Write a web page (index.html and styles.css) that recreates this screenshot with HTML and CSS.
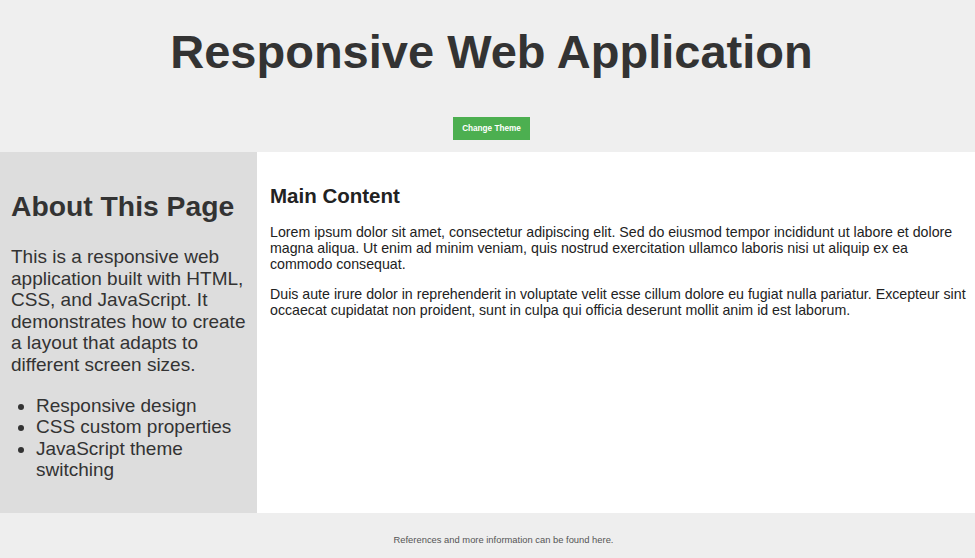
FILE: index.html
```html
<!DOCTYPE html>
<html lang="en">
<head>
<meta charset="utf-8">
<title>Responsive Web Application</title>
<link rel="stylesheet" href="styles.css">
</head>
<body>
<header class="site-header">
  <h1 class="site-title">Responsive Web Application</h1>
  <button class="theme-btn" type="button">Change Theme</button>
</header>
<div class="layout">
  <aside class="sidebar">
    <h2 class="sidebar-title">About This Page</h2>
    <p class="sidebar-text">This is a responsive web application built with HTML, CSS, and JavaScript. It demonstrates how to create a layout that adapts to different screen sizes.</p>
    <ul class="sidebar-list">
      <li>Responsive design</li>
      <li>CSS custom properties</li>
      <li>JavaScript theme switching</li>
    </ul>
  </aside>
  <main class="content">
    <h3 class="content-title">Main Content</h3>
    <p class="content-text">Lorem ipsum dolor sit amet, consectetur adipiscing elit. Sed do eiusmod tempor incididunt ut labore et dolore magna aliqua. Ut enim ad minim veniam, quis nostrud exercitation ullamco laboris nisi ut aliquip ex ea commodo consequat.</p>
    <p class="content-text">Duis aute irure dolor in reprehenderit in voluptate velit esse cillum dolore eu fugiat nulla pariatur. Excepteur sint occaecat cupidatat non proident, sunt in culpa qui officia deserunt mollit anim id est laborum.</p>
  </main>
</div>
<footer class="site-footer">
  <p class="footer-text">References and more information can be found here.</p>
</footer>
</body>
</html>
```

FILE: styles.css
```css
html, body {
  margin: 0;
  padding: 0;
}

body {
  font-family: "Liberation Sans", Arial, sans-serif;
  color: #333;
  background: #fff;
  height: 558px;
  display: flex;
  flex-direction: column;
}

.site-header {
  background: #efefef;
  display: flex;
  flex-direction: column;
  align-items: center;
  padding: 25px 0 12px 8px;
}

.site-title {
  margin: 0;
  font-size: 47px;
  font-weight: bold;
  color: #333;
  line-height: 53px;
}

.theme-btn {
  margin-top: 39px;
  background: #4caf50;
  color: #fff;
  border: none;
  font-family: "Liberation Sans", Arial, sans-serif;
  font-size: 8.2px;
  font-weight: bold;
  padding: 0;
  height: 23px;
  width: 77px;
  cursor: pointer;
}

.layout {
  flex: 1;
  display: flex;
  min-height: 0;
}

.sidebar {
  width: 257px;
  flex: none;
  box-sizing: border-box;
  background: #ddd;
  padding: 15px 11px 13px;
  color: #333;
}

.sidebar-title {
  font-size: 28.3px;
  margin: 23px 0;
}

.sidebar-text {
  font-size: 19px;
  line-height: 21.6px;
  margin: 19px 0;
}

.sidebar-list {
  font-size: 19px;
  line-height: 21.6px;
  margin: 19px 0;
  padding-left: 25px;
}

.content {
  flex: 1;
  background: #fff;
  padding: 12px 8px 13px 13px;
  color: #222;
}

.content-title {
  font-size: 20.5px;
  margin: 20px 0 16px;
}

.content-text {
  font-size: 14.2px;
  margin: 14px 0;
}

.site-footer {
  background: #eee;
  height: 45px;
  box-sizing: border-box;
  display: flex;
  align-items: center;
  justify-content: center;
  padding: 8px 0 0 32px;
}

.footer-text {
  margin: 0;
  font-size: 9.4px;
  color: #555;
}
```
